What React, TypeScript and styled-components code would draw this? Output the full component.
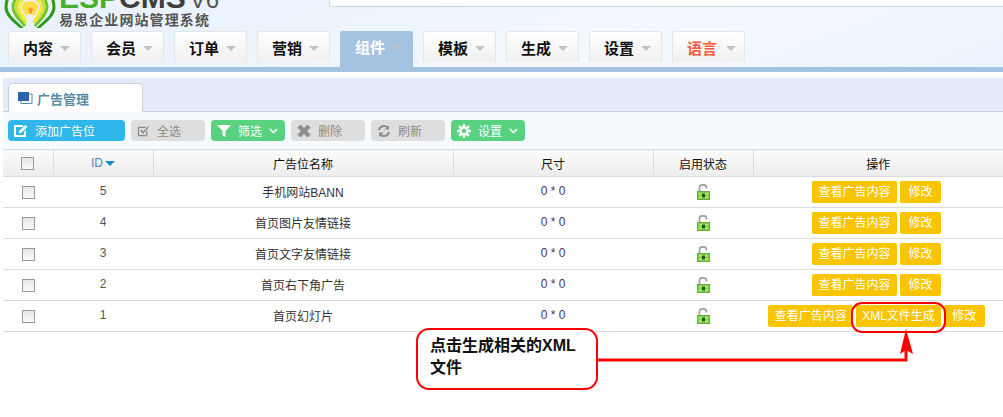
import React from "react";
import styled, { createGlobalStyle } from "styled-components";

const GlobalStyle = createGlobalStyle`
  html, body { margin: 0; padding: 0; background: #fff; }
  body { font-family: "Liberation Sans", "Noto Sans CJK SC", sans-serif; font-size: 12px; color: #222; }
`;

const NAV_ITEMS = ["内容", "会员", "订单", "营销", "组件", "模板", "生成", "设置", "语言"];

const ROWS = [
  { id: 5, name: "手机网站BANN" },
  { id: 4, name: "首页图片友情链接" },
  { id: 3, name: "首页文字友情链接" },
  { id: 2, name: "首页右下角广告" },
  { id: 1, name: "首页幻灯片", xml: true },
];

const Lock = () => (
  <svg width="13" height="16" viewBox="0 0 13 16">
    <path d="M2.500 7V3.500C2.500 1.500 4 .8 6 .8s3.500.7 3.500 2.700v1" fill="none" stroke="#a2a2a2" strokeWidth="1.700" />
    <rect x=".5" y="7.500" width="12" height="8" fill="#7fd03c" stroke="#6aa84a" />
    <rect x="2" y="9" width="9" height="1.500" fill="#b4ec72" />
    <rect x="2" y="12.500" width="9" height="1.500" fill="#b4ec72" />
    <rect x="5" y="9.500" width="3" height="4" fill="#1f5a1c" />
  </svg>
);

const LOGO_BANDS = [
  { color: "#2f9a1c", d: "M20 29C13 22 3 16 3 7 3-5 14-16 27-16S51-5 51 7c0 9-10 15-17 22" },
  { color: "#eaf3fb", d: "M22 27C16 21 7 15 7 7 7-3 16-12 27-12S47-3 47 7c0 8-9 14-15 20" },
  { color: "#72c52a", d: "M22 26C17 20 10 14 10 7 10-1 18-9 27-9S44-1 44 7c0 7-7 13-12 19" },
  { color: "#c6e23a", d: "M23 23C19 18 13 13 13 7 13 0 20-6 27-6S41 0 41 7c0 6-6 11-10 16" },
  { color: "#f5ea3e", d: "M23 21C20 17 16 12 16 7 16 1 22-3 27-3S38 1 38 7c0 5-4 10-7 14" },
];

const Logo = () => (
  <svg width="54" height="28" viewBox="0 0 54 28">
    {LOGO_BANDS.map((band) => (
      <path key={band.color} d={band.d} fill="none" stroke={band.color} strokeWidth="3" />
    ))}
    <path d="M27 1c-5 0-8 3-8 6 0 3 2 6 4 9 1-1 2-2 4-2s3 1 4 2c2-3 4-6 4-9 0-3-3-6-8-6Z" fill="#fbe04a" />
    <path d="M27.500 7l-3.500 3.500h2v3h3v-3h2Z" fill="#f2a024" />
  </svg>
);

const EditIcon = () => (
  <svg width="14" height="14" viewBox="0 0 14 14">
    <path d="M0 1h9v2H2v8h8V8l2-2v7H0Z" fill="currentColor" />
    <path d="M4.500 9.500l1-3L11.500 1l2 2-6 5.500Z" fill="currentColor" />
  </svg>
);

const CheckIcon = () => (
  <svg width="13" height="14" viewBox="0 0 15 14">
    <path d="M1 2h9v1.500H2.500v8h8V8L12 6.500V13H1Z" fill="currentColor" />
    <path d="M3.500 6.500l2-1 1.500 2 6-6 1 1-7 8Z" fill="currentColor" />
  </svg>
);

const FilterIcon = () => (
  <svg width="14" height="14" viewBox="0 0 14 14">
    <path d="M0 1h14L8.500 7v6l-3-1.500V7Z" fill="currentColor" />
  </svg>
);

const CrossIcon = () => (
  <svg width="14" height="14" viewBox="0 0 14 14">
    <path d="M3.500 1L7 4.500 10.500 1 13 3.500 9.500 7l3.500 3.500-2.500 2.500L7 9.500 3.500 13 1 10.500 4.500 7 1 3.500Z" fill="currentColor" stroke="currentColor" strokeLinejoin="round" />
  </svg>
);

const RefreshIcon = () => (
  <svg width="14" height="14" viewBox="0 0 14 14">
    <path d="M2 6a5 5 0 0 1 8.500-2.500" fill="none" stroke="currentColor" strokeWidth="2" />
    <path d="M12 1v4.500H7.500Z" fill="currentColor" />
    <path d="M12 8a5 5 0 0 1-8.500 2.500" fill="none" stroke="currentColor" strokeWidth="2" />
    <path d="M2 13V8.500h4.500Z" fill="currentColor" />
  </svg>
);

const GearIcon = () => (
  <svg width="14" height="14" viewBox="0 0 14 14">
    <circle cx="7" cy="7" r="3.500" fill="none" stroke="currentColor" strokeWidth="2.600" />
    {[0, 45, 90, 135, 180, 225, 270, 315].map((angle) => (
      <rect key={angle} x="5.800" y="0" width="2.400" height="3" fill="currentColor" transform={`rotate(${angle} 7 7)`} />
    ))}
  </svg>
);

const Chevron = () => (
  <svg width="9" height="6" viewBox="0 0 9 6">
    <path d="M1 1l3.500 3.500L8 1" fill="none" stroke="currentColor" strokeWidth="1.600" />
  </svg>
);

const WindowIcon = () => (
  <svg width="15" height="12" viewBox="0 0 15 12">
    <rect x="3" y="2" width="11" height="9.500" fill="none" stroke="#4f8fb8" />
    <rect x="0" y="0" width="11" height="9" fill="#2a62ad" />
  </svg>
);

export default function App() {
  return (
    <Page>
      <GlobalStyle />
      <Header>
        <TopRow>
          <LogoBlock>
            <Logo />
            <LogoWords>
              <Brand>
                <BrandLine>
                  ESP<BrandDark>CMS</BrandDark>
                  <Version>V6</Version>
                </BrandLine>
              </Brand>
              <Slogan>易思企业网站管理系统</Slogan>
            </LogoWords>
          </LogoBlock>
          <SearchBox />
        </TopRow>
        <Nav>
          {NAV_ITEMS.map((item) => (
            <NavTab key={item} $active={item === "组件"} $alert={item === "语言"}>
              {item}
              <NavCaret />
            </NavTab>
          ))}
        </Nav>
      </Header>
      <NavBar />

      <Panel>
        <PanelHead>
          <PanelTab>
            <WindowIcon />
            广告管理
          </PanelTab>
        </PanelHead>
        <Toolbar>
          <ToolButton $tone="blue" $wide>
            <EditIcon />
            添加广告位
          </ToolButton>
          <ToolButton $tone="gray">
            <CheckIcon />
            全选
          </ToolButton>
          <ToolButton $tone="green">
            <FilterIcon />
            筛选
            <Chevron />
          </ToolButton>
          <ToolButton $tone="gray">
            <CrossIcon />
            删除
          </ToolButton>
          <ToolButton $tone="gray">
            <RefreshIcon />
            刷新
          </ToolButton>
          <ToolButton $tone="green">
            <GearIcon />
            设置
            <Chevron />
          </ToolButton>
        </Toolbar>
        <Table>
          <colgroup>
            <col width="50" />
            <col width="100" />
            <col width="300" />
            <col width="200" />
            <col width="100" />
            <col width="250" />
          </colgroup>
          <thead>
            <tr>
              <Th>
                <Check type="checkbox" readOnly />
              </Th>
              <Th>
                <IdLabel>ID</IdLabel>
                <SortCaret />
              </Th>
              <Th>广告位名称</Th>
              <Th>尺寸</Th>
              <Th>启用状态</Th>
              <Th>操作</Th>
            </tr>
          </thead>
          <tbody>
            {ROWS.map((row) => (
              <tr key={row.id}>
                <Td>
                  <Check type="checkbox" readOnly />
                </Td>
                <TextCell $muted>{row.id}</TextCell>
                <TextCell>{row.name}</TextCell>
                <TextCell $size>0 * 0</TextCell>
                <Td>
                  <Lock />
                </Td>
                <Td>
                  <Actions>
                    <ActionButton $pad={6.5}>查看广告内容</ActionButton>
                    {row.xml && <ActionButton $pad={6}>XML文件生成</ActionButton>}
                    <ActionButton $pad={8.5}>修改</ActionButton>
                  </Actions>
                </Td>
              </tr>
            ))}
          </tbody>
        </Table>
      </Panel>

      <Highlight />
      <Callout>点击生成相关的XML文件</Callout>
      <Connector width="320" height="70" viewBox="0 0 320 70">
        <path d="M0 35H309V20" fill="none" stroke="#f00" strokeWidth="3" />
        <path d="M309 4L316 29L309 25L303 29Z" fill="#f00" />
      </Connector>
    </Page>
  );
}

const Page = styled.div`
  position: relative;
  width: 1003px;
  height: 417px;
  overflow: hidden;
  background: #fff;
`;

const Header = styled.header`
  height: 67px;
  display: flex;
  flex-direction: column;
  background: linear-gradient(160deg, #e8f1fb 0%, #eef5fd 45%, #f5f9fe 60%, #eaf3fc 100%);
`;

const TopRow = styled.div`
  height: 36px;
  display: flex;
  justify-content: space-between;
  align-items: flex-start;
  overflow: hidden;
`;

const LogoBlock = styled.div`
  display: flex;
  gap: 2px;
  padding-left: 3px;
  height: 28px;
  overflow: hidden;
`;

const LogoWords = styled.div`
  display: flex;
  flex-direction: column;
  gap: 5px;
  height: 28px;
`;

const Brand = styled.div`
  height: 8px;
  display: flex;
  align-items: flex-end;
  overflow: hidden;
`;

const BrandLine = styled.div`
  flex: none;
  height: 21px;
  font-size: 30px;
  line-height: 21px;
  font-weight: 700;
  color: #45b02c;
  white-space: nowrap;
`;

const BrandDark = styled.span`
  color: #3d3d3d;
`;

const Version = styled.span`
  margin-left: 4px;
  color: #555;
  font-weight: 400;
  font-size: 24px;
`;

const Slogan = styled.div`
  font-size: 14px;
  line-height: 15px;
  font-weight: 700;
  letter-spacing: 1.100px;
  color: #555;
  white-space: nowrap;
`;

const SearchBox = styled.div`
  width: 673px;
  height: 6px;
  background: #fff;
  border: solid #c5d5ea;
  border-width: 0 0 1px 1px;
  border-radius: 0 0 0 3px;
`;

const Nav = styled.nav`
  flex: 1;
  display: flex;
  gap: 10px;
  padding-left: 8px;
`;

const NavTab = styled.div<{ $active?: boolean; $alert?: boolean }>`
  width: 73px;
  height: ${(p) => (p.$active ? "36px" : "31px")};
  box-sizing: border-box;
  display: flex;
  align-items: center;
  padding: ${(p) => (p.$active ? "0 0 5px 15px" : "0 0 0 14px")};
  gap: ${(p) => (p.$alert ? "9px" : "7px")};
  font-size: 15px;
  font-weight: 700;
  color: ${(p) => (p.$active ? "#fff" : p.$alert ? "#f9593c" : "#111")};
  background: ${(p) => (p.$active ? "#a4c2e2" : "linear-gradient(#ffffff, #f0f0f0)")};
  border: ${(p) => (p.$active ? "0" : "1px solid #e2e5ea")};
  border-bottom: 0;
  border-radius: 3px 3px 0 0;
  position: relative;
  z-index: 1;
`;

const NavCaret = styled.span`
  width: 0;
  height: 0;
  margin-top: 2px;
  border-left: 5px solid transparent;
  border-right: 5px solid transparent;
  border-top: 5px solid #c2c2c2;
`;

const NavBar = styled.div`
  height: 5px;
  background: #a4c2e2;
  margin-bottom: 6px;
`;

const Panel = styled.section`
  margin-left: 3px;
`;

const PanelHead = styled.div`
  height: 34px;
  box-sizing: border-box;
  display: flex;
  align-items: flex-end;
  padding-left: 5px;
  background: #e3ecf8;
  border-bottom: 1px solid #c5d0de;
`;

const PanelTab = styled.div`
  width: 135px;
  height: 29px;
  box-sizing: border-box;
  margin-bottom: -1px;
  display: flex;
  align-items: center;
  gap: 4px;
  padding-left: 9px;
  font-size: 13px;
  font-weight: 700;
  color: #5d8ca6;
  background: #fff;
  border: 1px solid #c5d0de;
  border-bottom: 0;
  border-radius: 5px 5px 0 0;
`;

const TONES = {
  blue: { bg: "#2fb6ea", fg: "#fff" },
  gray: { bg: "#dedede", fg: "#8c8c8c" },
  green: { bg: "#58d27f", fg: "#fff" },
};

const Toolbar = styled.div`
  height: 37px;
  box-sizing: border-box;
  display: flex;
  align-items: center;
  gap: 6px;
  padding-left: 5px;
  background: #f5faff;
`;

const ToolButton = styled.div<{ $tone: keyof typeof TONES; $wide?: boolean }>`
  width: ${(p) => (p.$wide ? "117px" : "74px")};
  height: 21px;
  box-sizing: border-box;
  display: flex;
  align-items: center;
  gap: 7px;
  padding-left: 6px;
  border-radius: 4px;
  font-size: 12px;
  background: ${(p) => TONES[p.$tone].bg};
  color: ${(p) => TONES[p.$tone].fg};
`;

const Table = styled.table`
  width: 1000px;
  table-layout: fixed;
  border-collapse: collapse;
  background: #fff;
`;

const Th = styled.th`
  height: 26px;
  padding: 0;
  font-size: 12px;
  font-weight: 400;
  color: #111;
  text-align: center;
  background: linear-gradient(#fbfbfb, #ececec);
  border: solid #dcdcdc;
  border-width: 1px 1px 1px 0;
  &:last-child {
    border-right: 0;
  }
`;

const Td = styled.td`
  height: 30px;
  padding: 0;
  font-size: 12px;
  text-align: center;
  vertical-align: middle;
  border-bottom: 1px solid #dcdcdc;
  svg {
    display: block;
    margin: 0 auto;
  }
`;

const TextCell = styled(Td)<{ $muted?: boolean; $size?: boolean }>`
  height: 28px;
  padding-bottom: 2px;
  color: ${(p) => (p.$muted ? "#555" : p.$size ? "#4a3060" : "#333")};
`;

const Check = styled.input`
  display: block;
  margin: 0 auto;
  width: 13px;
  height: 13px;
  appearance: none;
  background: linear-gradient(#e6e6e6, #fafafa);
  border: 1px solid #999;
`;

const IdLabel = styled.span`
  color: #4a86c0;
`;

const SortCaret = styled.span`
  display: inline-block;
  margin-left: 2px;
  vertical-align: 1px;
  width: 0;
  height: 0;
  border-left: 5px solid transparent;
  border-right: 5px solid transparent;
  border-top: 5px solid #0a8fd0;
`;

const Actions = styled.div`
  display: flex;
  justify-content: center;
  gap: 3px;
  padding-right: 3px;
`;

const ActionButton = styled.div<{ $pad: number }>`
  height: 22px;
  line-height: 22px;
  padding: 0 ${(p) => p.$pad}px;
  border-radius: 2px;
  font-size: 12px;
  color: #fff;
  background: #f9c400;
  white-space: nowrap;
`;

const Highlight = styled.div`
  position: absolute;
  left: 851px;
  top: 302px;
  width: 95px;
  height: 31px;
  box-sizing: border-box;
  border: 2px solid #f00;
  border-radius: 11px;
`;

const Callout = styled.div`
  position: absolute;
  left: 416px;
  top: 328px;
  width: 182px;
  height: 62px;
  box-sizing: border-box;
  padding: 5px 12px 0;
  background: #fff;
  border: 2px solid #f00;
  border-radius: 13px;
  font-size: 16px;
  line-height: 22px;
  font-weight: 700;
  color: #111;
`;

const Connector = styled.svg`
  position: absolute;
  left: 597px;
  top: 325px;
`;
